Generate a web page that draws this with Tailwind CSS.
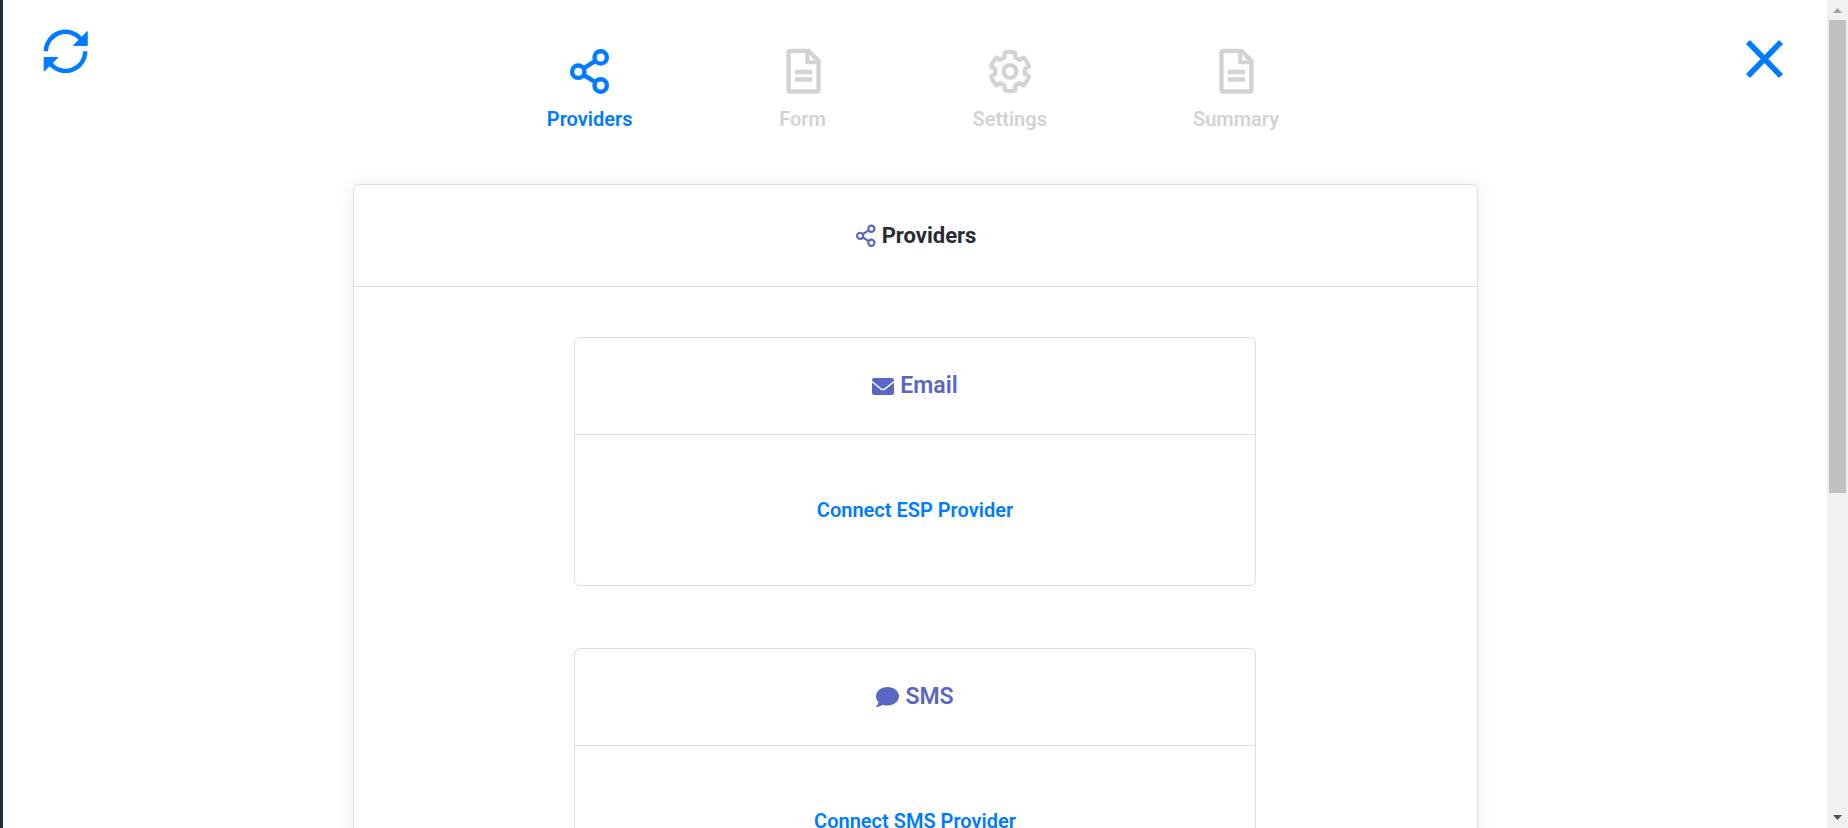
<!DOCTYPE html>
<html lang="en">
<head>
  <meta charset="UTF-8">
  <title>Providers</title>
  <script src="https://cdn.jsdelivr.net/npm/@tailwindcss/browser@4"></script>
</head>
<body class="flex h-screen overflow-hidden bg-white border-l-3 border-[#1f2d3d] font-['Roboto',sans-serif] font-semibold">

  <!-- Icons used more than once -->
  <svg class="hidden">
    <symbol id="icon-share" viewBox="0 0 48 48">
      <g fill="none" stroke="currentColor" stroke-width="4.4">
        <circle cx="34.7" cy="9.4" r="6.2"/>
        <circle cx="12.3" cy="23.7" r="6.2"/>
        <circle cx="34.7" cy="37.5" r="6.2"/>
        <path d="M17.6 20.4L29.4 12.8M17.6 27L29.4 34.2"/>
      </g>
    </symbol>
    <symbol id="icon-file" viewBox="0 0 48 48">
      <path fill="none" stroke="currentColor" stroke-width="4.4" d="M11 3H29.5L39.5 13V42Q39.5 43.500 38 43.500H11Q9.500 43.500 9.500 42V4.500Q9.500 3 11 3Z"/>
      <path fill="none" stroke="currentColor" stroke-width="4" d="M28.3 3V14.2H39.5"/>
      <path fill="none" stroke="currentColor" stroke-width="4.4" d="M16 24H33M16 31.5H33"/>
    </symbol>
  </svg>

  <main class="flex-1 overflow-hidden">
    <header class="flex items-start justify-between px-[39px] pt-[27px]">
      <button type="button" aria-label="Refresh" class="text-[#007bff]">
        <svg class="size-12" viewBox="0 0 48 48">
          <path fill="none" stroke="currentColor" stroke-width="4.4" d="M3.8 24.3A19.8 19.8 0 0 1 39 12.2M43.3 24.3A19.8 19.8 0 0 1 8 36.4"/>
          <path fill="currentColor" stroke="currentColor" stroke-linejoin="round" d="M45.2 4.6V18.4H31.5ZM2.2 30.5H15.8L2.2 44.2Z"/>
        </svg>
      </button>

      <nav class="flex gap-[146px] pt-[21px] pr-1 text-xl leading-6 text-[#d3d3d3]">
        <a href="#providers" class="flex flex-col items-center gap-[11px] text-[#007bff]">
          <svg class="size-12"><use href="#icon-share"/></svg>
          Providers
        </a>
        <a href="#form" class="flex flex-col items-center gap-[11px]">
          <svg class="size-12"><use href="#icon-file"/></svg>
          Form
        </a>
        <a href="#settings" class="flex flex-col items-center gap-[11px]">
          <svg class="size-12" viewBox="-24 -23.5 48 48" fill="none" stroke="currentColor" stroke-width="4.2" stroke-linejoin="round">
            <circle r="6.3"/>
            <path d="M-5.3 -14V-18.8A19.5 19.5 0 0 1 5.3 -18.8V-14L9.5 -11.6L13.6 -14A19.5 19.5 0 0 1 18.9 -4.8L14.8 -2.4V2.4L18.9 4.8A19.5 19.5 0 0 1 13.6 14L9.5 11.6L5.3 14V18.8A19.5 19.5 0 0 1 -5.3 18.8V14L-9.5 11.6L-13.6 14A19.5 19.5 0 0 1 -18.9 4.8L-14.8 2.4V-2.4L-18.9 -4.8A19.5 19.5 0 0 1 -13.6 -14L-9.5 -11.6Z"/>
          </svg>
          Settings
        </a>
        <a href="#summary" class="flex flex-col items-center gap-[11px]">
          <svg class="size-12"><use href="#icon-file"/></svg>
          Summary
        </a>
      </nav>

      <button type="button" aria-label="Close" class="pt-2 text-[#007bff]">
        <svg class="size-12" viewBox="0 0 48 48">
          <path stroke="currentColor" stroke-width="5.6" d="M8 7L41 41M41 7L8 41"/>
        </svg>
      </button>
    </header>

    <section id="providers" class="mx-auto mt-[53px] w-full max-w-[1125px] rounded-md border border-[#dfdfdf] bg-white pb-12 shadow-[0_0_20px_rgba(0,0,0,0.08)]">
      <h1 class="flex h-[102px] items-center justify-center gap-1 border-b border-[#dfdfdf] text-[22px] font-bold text-[#272b35]">
        <svg class="size-6 text-[#5867c3]"><use href="#icon-share"/></svg>
        Providers
      </h1>

      <div class="mx-auto mt-[50px] flex max-w-[682px] flex-col gap-[62px]">
        <article class="rounded-md border border-[#dfdfdf]">
          <h2 class="flex h-[97px] items-center justify-center gap-[6px] border-b border-[#dfdfdf] text-[23px] text-[#5867c3]">
            <svg class="w-[22px]" viewBox="0 0 22 17" fill="currentColor">
              <path d="M2 0H20Q22 0 22 2V2.7L12.7 10.2Q11 11.4 9.3 10.2L0 2.7V2Q0 0 2 0Z"/>
              <path d="M0 4.5L8.6 11.4Q11 13.1 13.4 11.4L22 4.5V15Q22 17 20 17H2Q0 17 0 15Z"/>
            </svg>
            Email
          </h2>
          <div class="flex h-[150px] items-center justify-center">
            <a href="#esp" class="text-xl text-[#007bff]">Connect ESP Provider</a>
          </div>
        </article>

        <article class="rounded-md border border-[#dfdfdf]">
          <h2 class="flex h-[97px] items-center justify-center gap-[6px] border-b border-[#dfdfdf] text-[23px] text-[#5867c3]">
            <svg class="w-[23px]" viewBox="0 0 23 20" fill="currentColor">
              <path d="M11.5 0C17.9 0 23 4.2 23 9.3S17.9 18.6 11.5 18.6C9.8 18.6 8.1 18.3 6.6 17.7C5.1 18.9 2.9 20 .4 20C0 20 -.1 19.6 .1 19.3C1.2 18.2 2.3 16.6 2.6 15.2C1 13.6 0 11.5 0 9.3C0 4.2 5.1 0 11.5 0Z"/>
            </svg>
            SMS
          </h2>
          <div class="flex h-[150px] items-center justify-center">
            <a href="#sms" class="text-xl text-[#007bff]">Connect SMS Provider</a>
          </div>
        </article>
      </div>
    </section>
  </main>

  <!-- Scrollbar -->
  <aside class="flex w-[21px] flex-col bg-[#f0f0f0]" aria-hidden="true">
    <svg class="h-5 w-full" viewBox="0 0 21 20"><path fill="#a3a3a3" d="M6 13L10.5 8L15 13Z"/></svg>
    <div class="flex-1 px-0.5">
      <div class="h-[60%] bg-[#c1c1c1]"></div>
    </div>
    <svg class="h-5 w-full" viewBox="0 0 21 20"><path fill="#505050" d="M6 7L10.5 12L15 7Z"/></svg>
  </aside>
</body>
</html>
